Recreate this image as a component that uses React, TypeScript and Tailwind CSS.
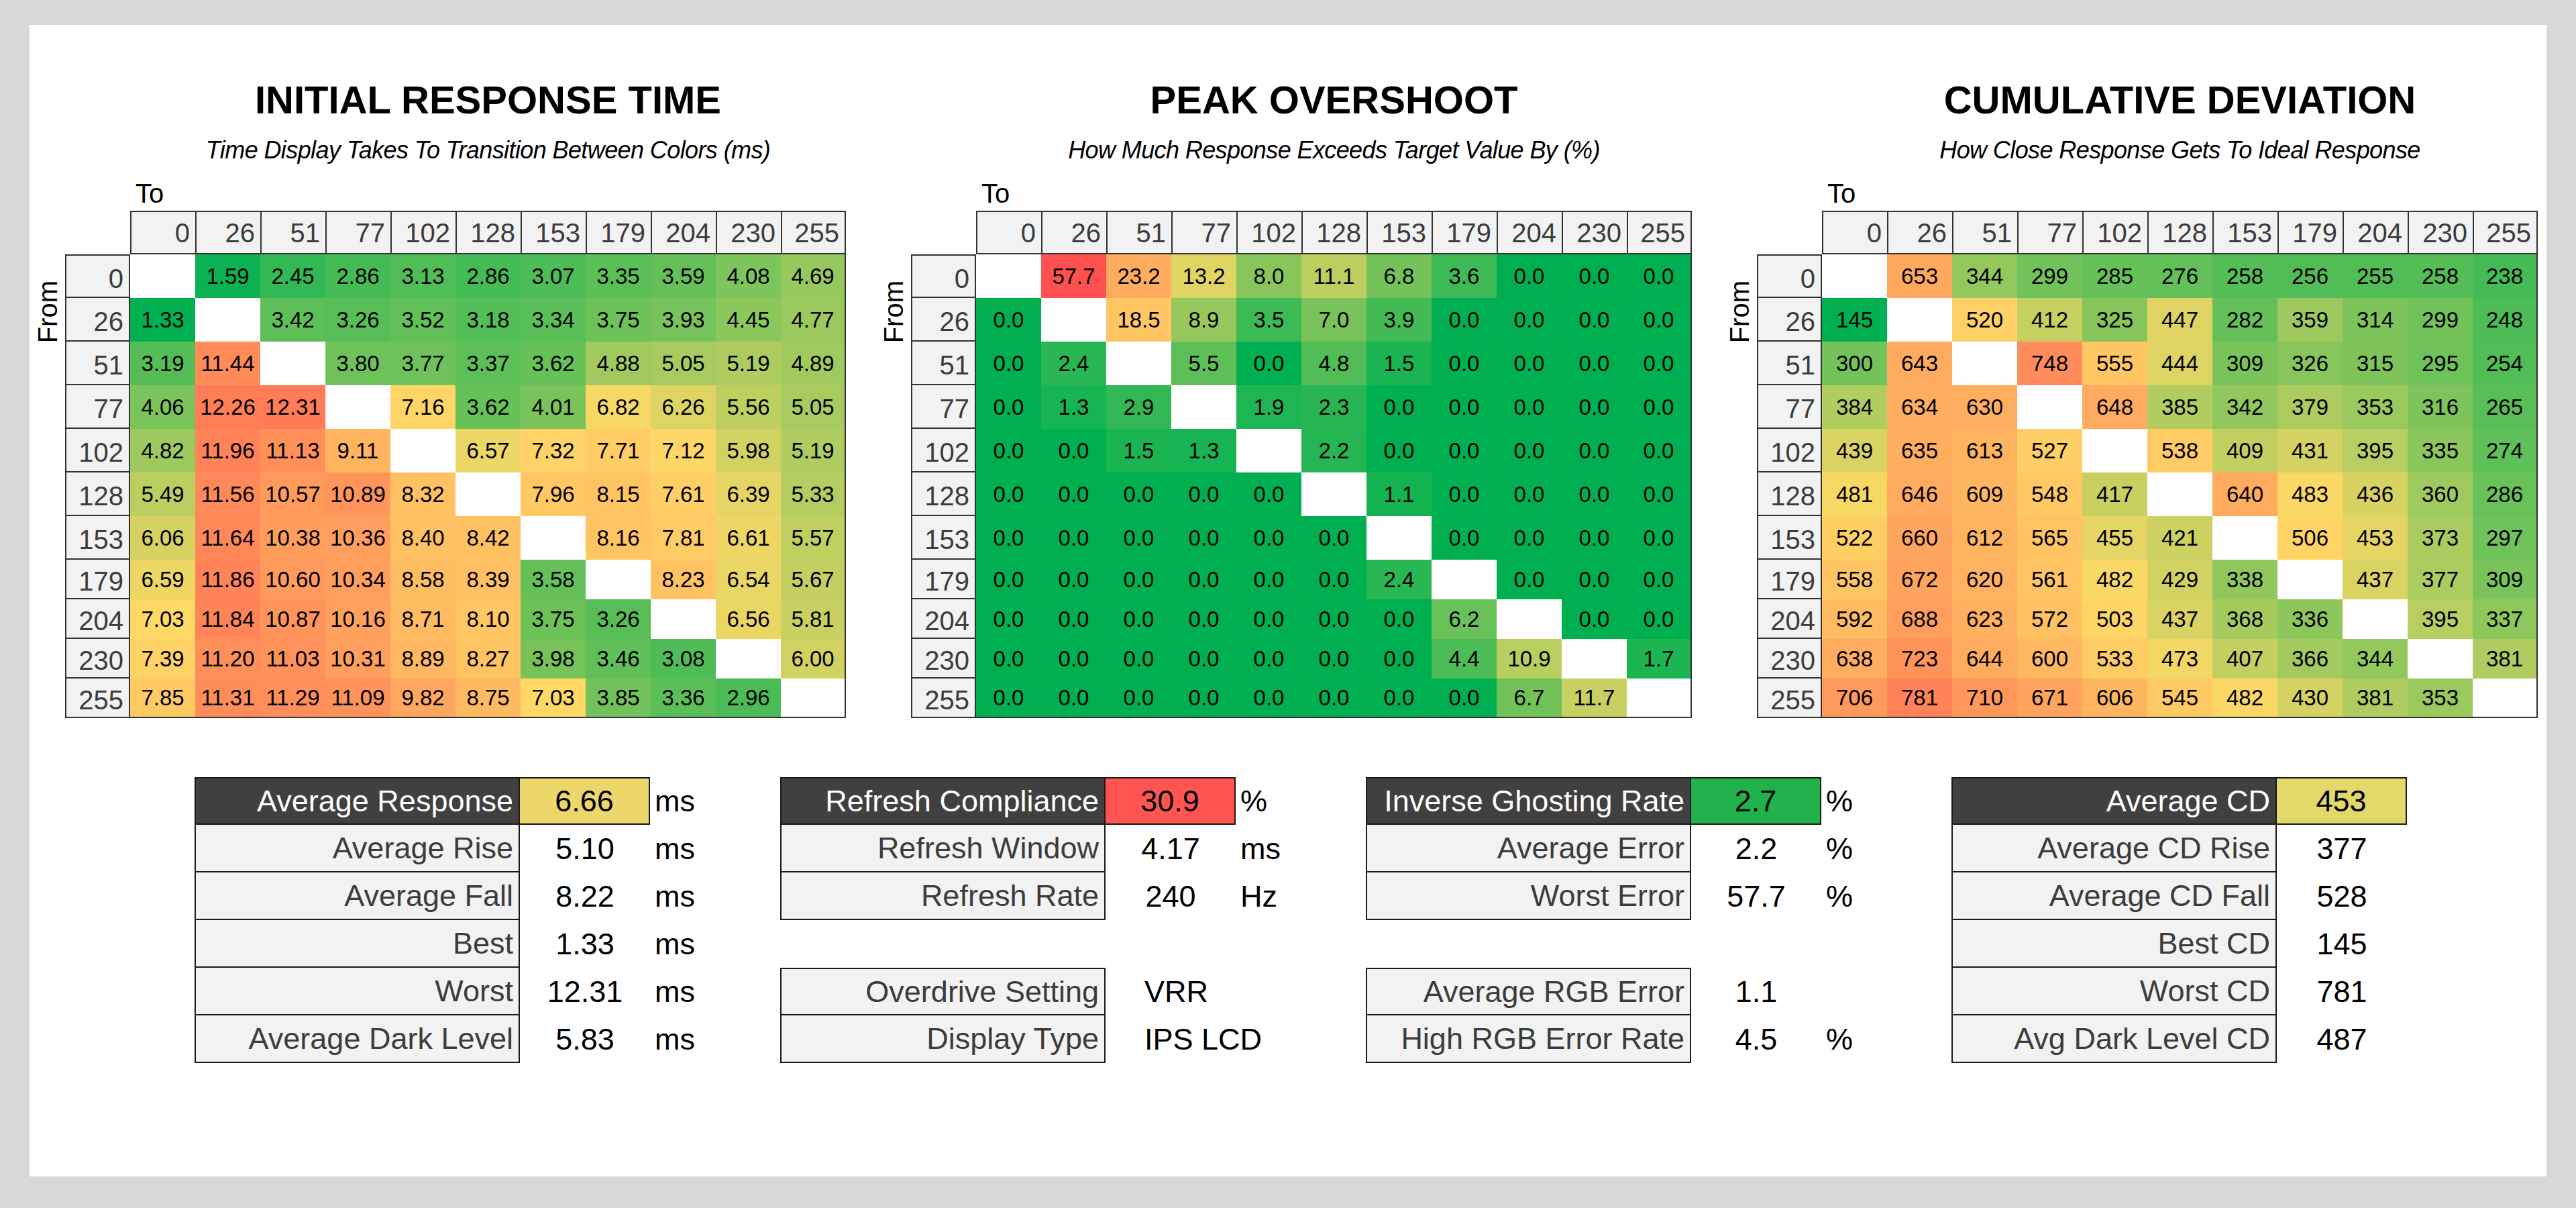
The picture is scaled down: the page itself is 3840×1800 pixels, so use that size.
type Scale = { lo: number; mid: number; hi: number };

const GREEN = [0, 176, 80];
const YELLOW = [255, 217, 102];
const RED = [255, 80, 80];

const LEVELS = [0, 26, 51, 77, 102, 128, 153, 179, 204, 230, 255];

function mix(a: number[], b: number[], t: number) {
  const c = Math.min(1, Math.max(0, t));
  return `rgb(${a.map((v, i) => Math.round(v + (b[i] - v) * c)).join(",")})`;
}

function heat(v: number, s: Scale) {
  if (v <= s.mid) return mix(GREEN, YELLOW, (v - s.lo) / (s.mid - s.lo));
  return mix(YELLOW, RED, (v - s.mid) / (s.hi - s.mid));
}

const parse = (rows: string[]) => rows.map((r) => r.split(" ").map((c) => (c === "-" ? null : c)));

const responseRows = parse([
  "- 1.59 2.45 2.86 3.13 2.86 3.07 3.35 3.59 4.08 4.69",
  "1.33 - 3.42 3.26 3.52 3.18 3.34 3.75 3.93 4.45 4.77",
  "3.19 11.44 - 3.80 3.77 3.37 3.62 4.88 5.05 5.19 4.89",
  "4.06 12.26 12.31 - 7.16 3.62 4.01 6.82 6.26 5.56 5.05",
  "4.82 11.96 11.13 9.11 - 6.57 7.32 7.71 7.12 5.98 5.19",
  "5.49 11.56 10.57 10.89 8.32 - 7.96 8.15 7.61 6.39 5.33",
  "6.06 11.64 10.38 10.36 8.40 8.42 - 8.16 7.81 6.61 5.57",
  "6.59 11.86 10.60 10.34 8.58 8.39 3.58 - 8.23 6.54 5.67",
  "7.03 11.84 10.87 10.16 8.71 8.10 3.75 3.26 - 6.56 5.81",
  "7.39 11.20 11.03 10.31 8.89 8.27 3.98 3.46 3.08 - 6.00",
  "7.85 11.31 11.29 11.09 9.82 8.75 7.03 3.85 3.36 2.96 -",
]);

const overshootRows = parse([
  "- 57.7 23.2 13.2 8.0 11.1 6.8 3.6 0.0 0.0 0.0",
  "0.0 - 18.5 8.9 3.5 7.0 3.9 0.0 0.0 0.0 0.0",
  "0.0 2.4 - 5.5 0.0 4.8 1.5 0.0 0.0 0.0 0.0",
  "0.0 1.3 2.9 - 1.9 2.3 0.0 0.0 0.0 0.0 0.0",
  "0.0 0.0 1.5 1.3 - 2.2 0.0 0.0 0.0 0.0 0.0",
  "0.0 0.0 0.0 0.0 0.0 - 1.1 0.0 0.0 0.0 0.0",
  "0.0 0.0 0.0 0.0 0.0 0.0 - 0.0 0.0 0.0 0.0",
  "0.0 0.0 0.0 0.0 0.0 0.0 2.4 - 0.0 0.0 0.0",
  "0.0 0.0 0.0 0.0 0.0 0.0 0.0 6.2 - 0.0 0.0",
  "0.0 0.0 0.0 0.0 0.0 0.0 0.0 4.4 10.9 - 1.7",
  "0.0 0.0 0.0 0.0 0.0 0.0 0.0 0.0 6.7 11.7 -",
]);

const deviationRows = parse([
  "- 653 344 299 285 276 258 256 255 258 238",
  "145 - 520 412 325 447 282 359 314 299 248",
  "300 643 - 748 555 444 309 326 315 295 254",
  "384 634 630 - 648 385 342 379 353 316 265",
  "439 635 613 527 - 538 409 431 395 335 274",
  "481 646 609 548 417 - 640 483 436 360 286",
  "522 660 612 565 455 421 - 506 453 373 297",
  "558 672 620 561 482 429 338 - 437 377 309",
  "592 688 623 572 503 437 368 336 - 395 337",
  "638 723 644 600 533 473 407 366 344 - 381",
  "706 781 710 671 606 545 482 430 381 353 -",
]);

function HeatTable({
  title,
  subtitle,
  rows,
  scale,
}: {
  title: string;
  subtitle: string;
  rows: (string | null)[][];
  scale: Scale;
}) {
  return (
    <div className="flex w-[1212px] flex-col">
      <div className="ml-[145px] w-[1067px] whitespace-nowrap text-center text-[58px] font-bold leading-[58px] text-black">
        {title}
      </div>
      <div className="ml-[145px] mt-[28px] w-[1067px] whitespace-nowrap text-center text-[36px] italic leading-[36px] tracking-[-0.6px] text-black">
        {subtitle}
      </div>
      <div className="ml-[153px] mt-[26px] text-[40px] leading-[40px] text-black">To</div>
      <div className="mt-[6px] flex items-start">
        <div className="flex w-[48px] flex-col items-start pl-[6px] pt-[104px]">
          <span className="rotate-180 text-[40px] leading-[32px] text-black [writing-mode:vertical-rl]">From</span>
        </div>
        <div className="grid grid-cols-[repeat(12,97px)] grid-rows-[repeat(8,65px)_repeat(4,59px)]">
          <div />
          {LEVELS.map((l, i) => (
            <div
              key={l}
              className={`flex items-center justify-end border-y-2 border-l-2 border-[#333] bg-[#f2f2f2] pr-[8px] text-[40px] text-[#3c3c3c] ${
                i === 10 ? "border-r-2" : ""
              }`}
            >
              {l}
            </div>
          ))}
          {rows.map((row, r) => [
            <div
              key={`h${r}`}
              className={`flex items-center justify-end border-x-2 border-b-2 border-[#333] bg-[#f2f2f2] pr-[8px] pt-[6px] text-[40px] text-[#3c3c3c] ${
                r === 0 ? "border-t-2" : ""
              }`}
            >
              {LEVELS[r]}
            </div>,
            ...row.map((cell, c) => (
              <div
                key={`${r}-${c}`}
                className={`flex items-center justify-center border-[#333] text-[33px] text-black ${
                  c === 10 ? "border-r-2" : ""
                } ${r === 10 ? "border-b-2" : ""}`}
                style={{ backgroundColor: cell === null ? "#ffffff" : heat(parseFloat(cell), scale) }}
              >
                {cell}
              </div>
            )),
          ])}
        </div>
      </div>
    </div>
  );
}

type Stat = { label: string; value: string; unit?: string; head?: string; text?: boolean } | null;

const statBlocks: Stat[][] = [
  [
    { label: "Average Response", value: "6.66", unit: "ms", head: "#edd76b" },
    { label: "Average Rise", value: "5.10", unit: "ms" },
    { label: "Average Fall", value: "8.22", unit: "ms" },
    { label: "Best", value: "1.33", unit: "ms" },
    { label: "Worst", value: "12.31", unit: "ms" },
    { label: "Average Dark Level", value: "5.83", unit: "ms" },
  ],
  [
    { label: "Refresh Compliance", value: "30.9", unit: "%", head: "#ff5450" },
    { label: "Refresh Window", value: "4.17", unit: "ms" },
    { label: "Refresh Rate", value: "240", unit: "Hz" },
    null,
    { label: "Overdrive Setting", value: "VRR", text: true },
    { label: "Display Type", value: "IPS LCD", text: true },
  ],
  [
    { label: "Inverse Ghosting Rate", value: "2.7", unit: "%", head: "#22b24c" },
    { label: "Average Error", value: "2.2", unit: "%" },
    { label: "Worst Error", value: "57.7", unit: "%" },
    null,
    { label: "Average RGB Error", value: "1.1" },
    { label: "High RGB Error Rate", value: "4.5", unit: "%" },
  ],
  [
    { label: "Average CD", value: "453", head: "#e3d86a" },
    { label: "Average CD Rise", value: "377" },
    { label: "Average CD Fall", value: "528" },
    { label: "Best CD", value: "145" },
    { label: "Worst CD", value: "781" },
    { label: "Avg Dark Level CD", value: "487" },
  ],
];

function StatBlock({ stats }: { stats: Stat[] }) {
  return (
    <div className="grid w-[873px] grid-cols-[485px_194px_1fr] grid-rows-[repeat(6,71px)] text-[45px]">
      {stats.map((s, i) => {
        if (!s) return [<div key={`a${i}`} />, <div key={`b${i}`} />, <div key={`c${i}`} />];
        const top = i === 0 || stats[i - 1] === null;
        return [
          <div
            key={`l${i}`}
            className={`flex items-center justify-end whitespace-nowrap border-x-2 border-b-2 border-[#1a1a1a] pr-[8px] ${
              top ? "border-t-2" : ""
            } ${s.head ? "bg-[#404040] text-white" : "bg-[#f2f2f2] text-[#3c3c3c]"}`}
          >
            {s.label}
          </div>,
          <div
            key={`v${i}`}
            className={`flex items-center whitespace-nowrap text-black ${
              s.text ? "justify-start pl-[58px]" : "justify-center"
            } ${s.head ? "border-y-2 border-r-2 border-[#1a1a1a]" : ""}`}
            style={s.head ? { backgroundColor: s.head } : undefined}
          >
            {s.value}
          </div>,
          <div key={`u${i}`} className="flex items-center pl-[7px] text-black">
            {s.unit ?? ""}
          </div>,
        ];
      })}
    </div>
  );
}

export default function App() {
  return (
    <div className="min-h-screen bg-[#d9d9d9] px-[44px] pt-[37px] pb-[47px] font-['Liberation_Sans',Arial,sans-serif]">
      <div className="h-[1716px] bg-white pl-[5px] pt-[83px]">
        <div className="flex gap-[49px]">
          <HeatTable
            title="INITIAL RESPONSE TIME"
            subtitle="Time Display Takes To Transition Between Colors (ms)"
            rows={responseRows}
            scale={{ lo: 1.33, mid: 7, hi: 14.8 }}
          />
          <HeatTable
            title="PEAK OVERSHOOT"
            subtitle="How Much Response Exceeds Target Value By (%)"
            rows={overshootRows}
            scale={{ lo: 0, mid: 15, hi: 40 }}
          />
          <HeatTable
            title="CUMULATIVE DEVIATION"
            subtitle="How Close Response Gets To Ideal Response"
            rows={deviationRows}
            scale={{ lo: 145, mid: 490, hi: 950 }}
          />
        </div>
        <div className="mt-[88px] flex pl-[241px]">
          {statBlocks.map((b, i) => (
            <StatBlock key={i} stats={b} />
          ))}
        </div>
      </div>
    </div>
  );
}
